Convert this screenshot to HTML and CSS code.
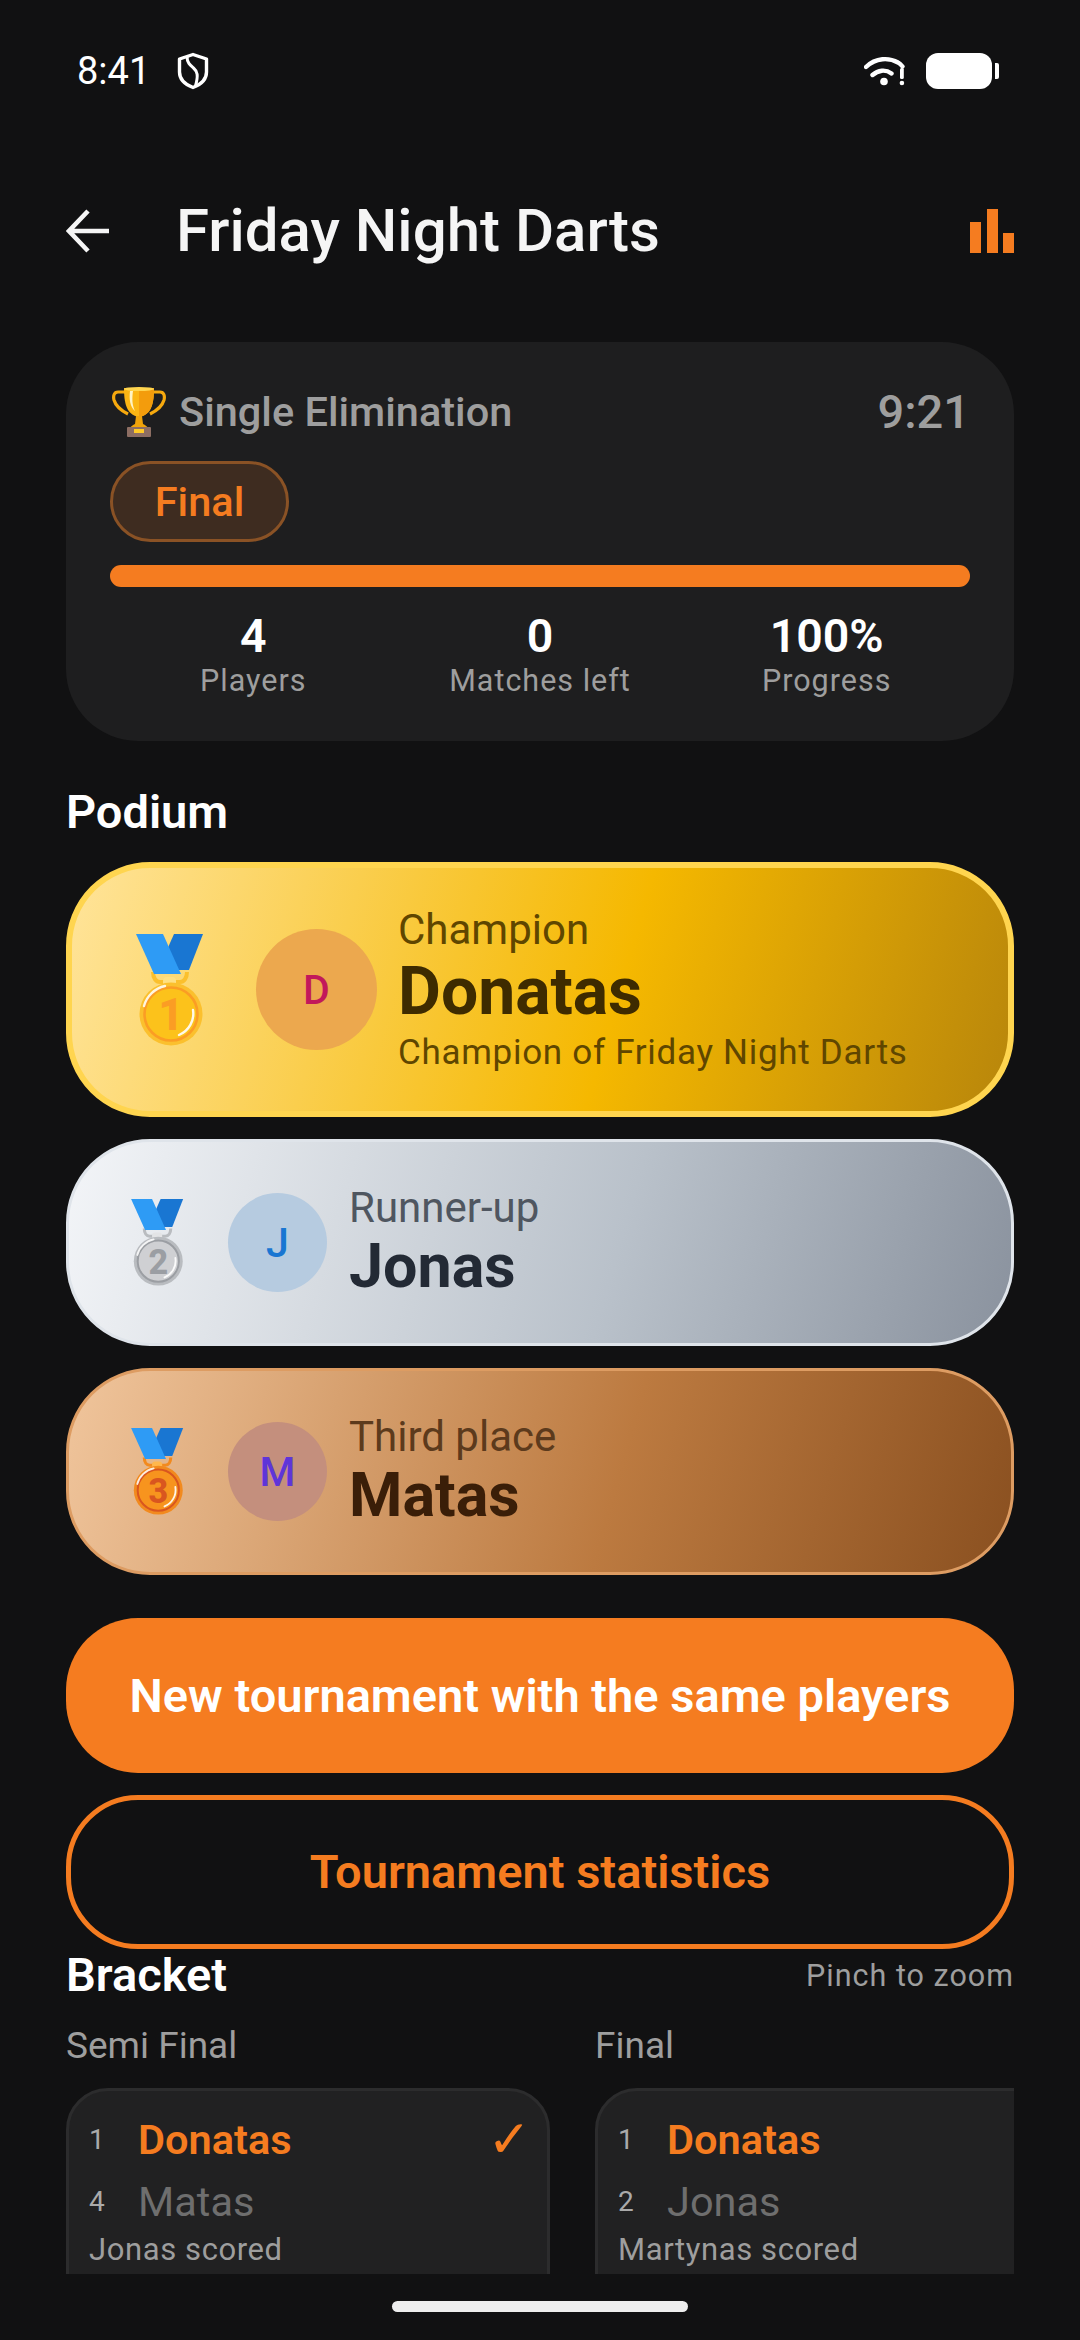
FILE: index.html
```html
<!DOCTYPE html>
<html lang="en">
<head>
<meta charset="utf-8">
<title>Friday Night Darts</title>
<link rel="stylesheet" href="styles.css">
</head>
<body>
<svg class="defs" width="0" height="0" aria-hidden="true">
  <defs>
    <symbol id="medal" viewBox="0 0 68 112">
      <path d="M17 38c0 6 3 10 7 10h20c4 0 7-4 7-10" fill="none" stroke="var(--m-rim)" stroke-width="4"/>
      <rect x="27" y="43" width="13" height="10" rx="4" fill="var(--m-light)"/>
      <circle cx="35" cy="80" r="31.5" fill="var(--m-rim)"/>
      <circle cx="35" cy="80" r="26.5" fill="var(--m-face)" stroke="var(--m-ring)" stroke-width="2.6"/>
      <path d="M8 72a28 28 0 0 1 21-20" fill="none" stroke="#fff" stroke-opacity=".85" stroke-width="2.4" stroke-linecap="round"/>
      <path d="M57 76a23 23 0 0 1-14 25" fill="none" stroke="#fff" stroke-opacity=".9" stroke-width="2.4" stroke-linecap="round"/>
      <polygon points="38,0 67,0 53,36 33,36 30,18" fill="#1976d2"/>
      <polygon points="0,0 27,0 45,40 18,40" fill="#2e9bf5"/>
    </symbol>
  </defs>
</svg>
<div class="screen">
  <div class="status">
    <div class="status-left">
      <span class="clock">8:41</span>
      <svg class="shield" viewBox="0 0 32 38"><path d="M16 2.5 29.5 7v13c0 7-5.500 12.500-13.500 15.500C8 32.500 2.500 27 2.500 20V7z" fill="none" stroke="#fff" stroke-width="3.400" stroke-linejoin="round"/><path d="M10 4.500c0 6 3 8.500 6.500 11.500 4 3.500 5 7 2 18" fill="none" stroke="#fff" stroke-width="3"/></svg>
    </div>
    <div class="status-right">
      <svg class="wifi" viewBox="0 0 42 30"><path d="M2 11C12 1.500 25 1.500 34 6.500c2 1 3 2 4.500 4M8.500 19c5.500-5 13-6 19-1.500" fill="none" stroke="#fff" stroke-width="4.400" stroke-linecap="round"/><circle cx="20" cy="25.500" r="3.800" fill="#fff"/><rect x="36" y="12" width="3.800" height="11" rx="1.500" fill="#fff"/><circle cx="37.900" cy="27" r="2.300" fill="#fff"/></svg>
      <div class="battery"><span class="battery-body"></span><span class="battery-nub"></span></div>
    </div>
  </div>

  <header class="appbar">
    <svg class="back" viewBox="0 0 44 44"><path d="M43 22H4M22 2 3 22l19 20" fill="none" stroke="#f5f5f5" stroke-width="4.600"/></svg>
    <h1 class="title">Friday Night Darts</h1>
    <div class="chart-icon"><span class="bar-a"></span><span class="bar-b"></span><span class="bar-c"></span></div>
  </header>

  <main class="content">
    <section class="summary">
      <div class="summary-top">
        <div class="format">
          <svg class="trophy" viewBox="0 0 54 52">
            <path d="M14 6H6C2 6 1 10 2 14c2 7 8 11 14 14M40 6h8c4 0 5 4 4 8-2 7-8 11-14 14" fill="none" stroke="#f6a90e" stroke-width="3.200"/>
            <path d="M12 2h30c0 14-2 27-15 29C14 29 12 16 12 2z" fill="#fbb514"/>
            <path d="M27 2h15c0 14-2 27-15 29z" fill="#f39c0c"/>
            <path d="M18 5c-1 8 0 16 5 20-3-6-3-13-2-20z" fill="#fff3c4"/>
            <ellipse cx="27" cy="3" rx="15" ry="2" fill="#ffd54f"/>
            <path d="M24 30h6l1 8c2 1 4 2 5 4H18c1-2 3-3 5-4z" fill="#f0a30a"/>
            <rect x="15" y="41" width="24" height="10" rx="1" fill="#8d6e63"/>
            <rect x="22" y="43" width="10" height="4" fill="#ffca28"/>
          </svg>
          <span class="format-name">Single Elimination</span>
        </div>
        <span class="timer">9:21</span>
      </div>
      <span class="pill">Final</span>
      <div class="progress"></div>
      <div class="stats">
        <div class="stat"><strong class="stat-value">4</strong><span class="stat-label">Players</span></div>
        <div class="stat"><strong class="stat-value">0</strong><span class="stat-label">Matches left</span></div>
        <div class="stat"><strong class="stat-value">100%</strong><span class="stat-label">Progress</span></div>
      </div>
    </section>

    <h2 class="section-title podium-title">Podium</h2>

    <article class="place place-gold">
      <svg class="medal medal-gold" viewBox="0 0 68 112"><use href="#medal"/><text x="35" y="96" text-anchor="middle" class="medal-digit">1</text></svg>
      <div class="avatar avatar-gold">D</div>
      <div class="place-text">
        <span class="place-label">Champion</span>
        <span class="place-name">Donatas</span>
        <span class="place-sub">Champion of Friday Night Darts</span>
      </div>
    </article>

    <article class="place place-silver">
      <svg class="medal medal-silver" viewBox="0 0 68 112"><use href="#medal"/><text x="35" y="96" text-anchor="middle" class="medal-digit">2</text></svg>
      <div class="avatar avatar-silver">J</div>
      <div class="place-text">
        <span class="place-label">Runner-up</span>
        <span class="place-name">Jonas</span>
      </div>
    </article>

    <article class="place place-bronze">
      <svg class="medal medal-bronze" viewBox="0 0 68 112"><use href="#medal"/><text x="35" y="96" text-anchor="middle" class="medal-digit">3</text></svg>
      <div class="avatar avatar-bronze">M</div>
      <div class="place-text">
        <span class="place-label">Third place</span>
        <span class="place-name">Matas</span>
      </div>
    </article>

    <button class="btn btn-solid" type="button">New tournament with the same players</button>
    <button class="btn btn-outline" type="button">Tournament statistics</button>

    <div class="bracket-head">
      <h2 class="section-title">Bracket</h2>
      <span class="hint">Pinch to zoom</span>
    </div>

    <div class="bracket">
      <div class="round">
        <div class="round-title">Semi Final</div>
        <div class="match">
          <div class="row"><span class="seed">1</span><span class="player winner">Donatas</span><span class="check">✓</span></div>
          <div class="row"><span class="seed">4</span><span class="player">Matas</span></div>
          <div class="scored">Jonas scored</div>
        </div>
      </div>
      <div class="round">
        <div class="round-title">Final</div>
        <div class="match">
          <div class="row"><span class="seed">1</span><span class="player winner">Donatas</span></div>
          <div class="row"><span class="seed">2</span><span class="player">Jonas</span></div>
          <div class="scored">Martynas scored</div>
        </div>
      </div>
    </div>
  </main>

  <div class="home-bar"></div>
</div>
</body>
</html>
```
FILE: styles.css
```css
* { box-sizing: border-box; margin: 0; padding: 0; }

html, body { background: #111112; }

body { font-family: Roboto, "Noto Sans", sans-serif; }

.defs { display: block; height: 0; }

.screen {
  width: 1080px;
  height: 2340px;
  overflow: hidden;
  background: #111112;
  color: #fff;
}

/* status bar */
.status {
  height: 142px;
  padding: 0 81px 0 77px;
  display: flex;
  align-items: center;
  justify-content: space-between;
}
.status-left { display: flex; align-items: center; gap: 27px; }
.clock { font-size: 38px; line-height: 42px; color: #fff; }
.shield { width: 32px; height: 38px; display: block; }
.status-right { display: flex; align-items: center; gap: 20px; }
.wifi { width: 42px; height: 30px; display: block; }
.battery { display: flex; align-items: center; gap: 3px; }
.battery-body { width: 66px; height: 36px; background: #fff; border-radius: 12px; display: block; }
.battery-nub { width: 4px; height: 16px; background: #fff; border-radius: 0 2px 2px 0; display: block; }

/* app bar */
.appbar {
  height: 178px;
  padding: 0 66px;
  display: flex;
  align-items: center;
}
.back { width: 44px; height: 44px; display: block; flex: none; }
.title {
  margin-left: 66px;
  flex: 1;
  font-size: 60px;
  line-height: 70px;
  font-weight: 500;
  color: #f5f5f5;
}
.chart-icon {
  width: 44px;
  height: 44px;
  display: flex;
  align-items: flex-end;
  justify-content: space-between;
}
.chart-icon span { width: 11px; background: #f57c20; display: block; }
.bar-a { height: 31px; }
.bar-b { height: 44px; }
.bar-c { height: 20px; }

/* main column */
.content { margin-top: 22px; padding: 0 66px; }

.summary {
  height: 399px;
  padding: 38px 44px 0;
  background: #1e1e1f;
  border-radius: 72px;
}
.summary-top { height: 64px; display: flex; align-items: center; justify-content: space-between; }
.format { display: flex; align-items: center; gap: 13px; margin-left: 2px; }
.trophy { width: 54px; height: 52px; display: block; }
.format-name { font-size: 41.500px; line-height: 48px; font-weight: 500; color: #9e9e9e; }
.timer { font-size: 47px; line-height: 52px; font-weight: 500; color: #9e9e9e; }

.pill {
  display: flex;
  align-items: center;
  justify-content: center;
  width: 179px;
  height: 81px;
  margin-top: 17px;
  border: 3px solid #8a5225;
  border-radius: 41px;
  background: #3e2c20;
  color: #f57c20;
  font-size: 41.500px;
  font-weight: 500;
}
.progress { height: 22px; margin-top: 23px; background: #f57c20; border-radius: 11px; }

.stats { display: flex; margin-top: 22px; }
.stat { flex: 1; display: flex; flex-direction: column; align-items: center; }
.stat-value { font-size: 46.500px; line-height: 54px; font-weight: 600; color: #fff; }
.stat-label { font-size: 30.500px; line-height: 36px; letter-spacing: 1px; color: #9e9e9e; }

.section-title { font-size: 47px; line-height: 52px; font-weight: 600; color: #fff; }
.podium-title { margin-top: 45px; }

/* podium */
.place {
  display: flex;
  align-items: center;
  border-radius: 84px;
  border-style: solid;
}
.place-gold {
  height: 255px;
  margin-top: 24px;
  padding-left: 64px;
  border-width: 6px;
  border-color: #ffd54f;
  background: linear-gradient(106deg, #ffe49a 0%, #f5b800 58%, #b8860b 100%);
  gap: 52px;
}
.place-silver {
  height: 207px;
  margin-top: 22px;
  padding-left: 62px;
  border-width: 3px;
  border-color: #dfe4ea;
  background: linear-gradient(106deg, #f3f5f8 0%, #b9c1ca 58%, #8a929e 100%);
  gap: 44px;
}
.place-bronze {
  height: 207px;
  margin-top: 22px;
  padding-left: 62px;
  border-width: 3px;
  border-color: #dd9c62;
  background: linear-gradient(106deg, #f0c59c 0%, #bc7a40 58%, #8a5020 100%);
  gap: 44px;
}

.medal { display: block; flex: none; }
.place-gold .medal { width: 68px; height: 112px; }
.place-silver .medal, .place-bronze .medal { width: 53px; height: 87px; }
.medal-gold { --m-rim: #fbc02d; --m-face: #fcc21b; --m-ring: #fb9d24; --m-light: #ffe082; }
.medal-silver { --m-rim: #b9bcc0; --m-face: #cfd0d3; --m-ring: #9b9ea3; --m-light: #e3e4e6; }
.medal-bronze { --m-rim: #f28a1e; --m-face: #f7941e; --m-ring: #d9561f; --m-light: #ffb74d; }
.medal-digit { font-family: Roboto, sans-serif; font-size: 44px; font-weight: 800; }
.medal-gold .medal-digit { fill: #fb9d24; }
.medal-silver .medal-digit { fill: #9b9ea3; }
.medal-bronze .medal-digit { fill: #d9561f; }

.avatar {
  flex: none;
  display: flex;
  align-items: center;
  justify-content: center;
  border-radius: 50%;
  font-weight: 500;
}
.avatar-gold { width: 121px; height: 121px; font-size: 41px; background: #eca84e; color: #c2185b; }
.avatar-silver { width: 99px; height: 99px; font-size: 41px; background: #b6cbe0; color: #1976d2; }
.avatar-bronze { width: 99px; height: 99px; font-size: 41px; background: #c48f7d; color: #5e35d8; }

.place-text { display: flex; flex-direction: column; }
.place-gold .place-text { margin-left: -31px; padding-top: 2px; }
.place-silver .place-text, .place-bronze .place-text { margin-left: -22px; }
.place-label { font-size: 42px; line-height: 46px; }
.place-name { font-size: 61px; line-height: 70px; font-weight: 700; }
.place-gold .place-name { font-size: 66px; line-height: 78px; }
.place-sub { font-size: 35px; line-height: 44px; letter-spacing: .7px; }
.place-gold .place-label, .place-gold .place-sub { color: #5f4600; }
.place-gold .place-name { color: #3e2b00; }
.place-silver .place-label { color: #4f5660; }
.place-silver .place-name { color: #232a35; }
.place-bronze .place-label { color: #5c3a1c; }
.place-bronze .place-name { color: #3a1e08; }

/* buttons */
.btn {
  display: flex;
  align-items: center;
  justify-content: center;
  width: 100%;
  font-family: inherit;
  font-size: 47px;
  font-weight: 600;
}
.btn-solid {
  height: 155px;
  margin-top: 43px;
  border: 0;
  border-radius: 72px;
  background: #f57c20;
  color: #fff;
}
.btn-outline {
  height: 154px;
  margin-top: 22px;
  padding-bottom: 2px;
  border: 5px solid #f57c20;
  border-radius: 72px;
  background: transparent;
  color: #f57c20;
}

/* bracket */
.bracket-head { height: 52px; display: flex; align-items: center; justify-content: space-between; }
.hint { font-size: 30.500px; letter-spacing: 1px; color: #9e9e9e; }

.bracket { height: 251px; margin-top: 22px; overflow: hidden; display: flex; gap: 45px; }
.round { flex: none; width: 484px; }
.round-title { font-size: 37px; line-height: 46px; color: #9e9e9e; }
.match {
  height: 260px;
  margin-top: 19px;
  padding: 17px 20px 0;
  background: #212122;
  border: 3px solid #2c2c2d;
  border-radius: 42px;
}
.row { height: 62px; display: flex; align-items: center; }
.seed { width: 49px; flex: none; font-size: 28px; color: #aaa; }
.player { flex: 1; font-size: 41.500px; color: #6e6e6e; }
.winner { color: #f57c20; font-weight: 600; }
.check { font-family: "DejaVu Sans", sans-serif; font-size: 52px; line-height: 52px; color: #f57c20; margin-right: -4px; }
.scored { font-size: 31px; line-height: 35px; letter-spacing: .6px; color: #9e9e9e; }

.home-bar { width: 296px; height: 11px; margin: 27px auto 0; background: #eee; border-radius: 6px; }
```
